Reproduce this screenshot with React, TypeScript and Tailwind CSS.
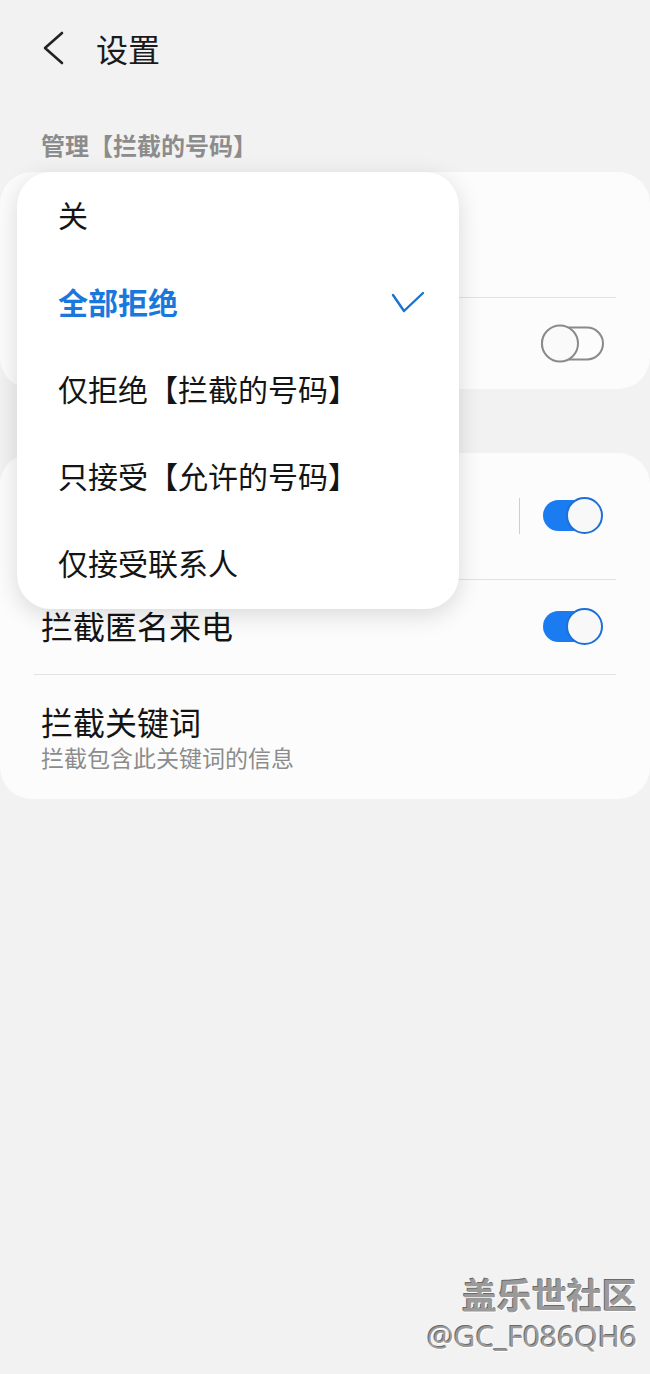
import { FC } from "react";

const font = "font-['Noto_Sans_CJK_SC','Noto_Sans',sans-serif]";

const Toggle: FC<{ on?: boolean }> = ({ on }) =>
    on ? (
        <svg width="64" height="40" viewBox="0 0 64 40">
            <rect x="2" y="4" width="52" height="31" rx="15.5" fill="#1a7cf0" />
            <circle cx="43.5" cy="19.5" r="17.5" fill="#f8f8f8" stroke="#1f70d6" strokeWidth="2" />
        </svg>
    ) : (
        <svg width="64" height="40" viewBox="0 0 64 40">
            <rect x="1" y="3.5" width="61" height="32" rx="16" fill="none" stroke="#8a8a8a" strokeWidth="2" />
            <circle cx="19" cy="19.5" r="18" fill="#fafafa" stroke="#8a8a8a" strokeWidth="2" />
        </svg>
    );

const options = ["关", "全部拒绝", "仅拒绝【拦截的号码】", "只接受【允许的号码】", "仅接受联系人"];

const App: FC = () => {
    const selected = 1;

    return (
        <div className={`relative flex min-h-[1374px] w-[650px] flex-col bg-[#f2f2f2] ${font}`}>
            {/* header */}
            <div className="flex h-[96px] items-center pl-[42px]">
                <svg width="24" height="34" viewBox="0 0 24 34" className="mr-[30px]">
                    <polyline points="20,2 3,17 20,32" fill="none" stroke="#222" strokeWidth="2.6" strokeLinecap="round" strokeLinejoin="round" />
                </svg>
                <span className="text-[32px] leading-none text-[#1a1a1a]">设置</span>
            </div>

            <div className="mt-[33px] mb-[12px] pl-[41px] text-[24px] leading-[31px] font-bold text-[#8c8c8c]">
                管理【拦截的号码】
            </div>

            {/* card 1 */}
            <div className="rounded-[32px] bg-[#fcfcfc]">
                <div className="h-[125px]" />
                <div className="mx-[34px] h-px bg-[#e2e2e2]" />
                <div className="flex h-[91px] items-center justify-end pr-[45px]">
                    <Toggle />
                </div>
            </div>

            {/* card 2 */}
            <div className="mt-[64px] rounded-[32px] bg-[#fcfcfc]">
                <div className="flex h-[126px] items-center justify-end pr-[45px]">
                    <div className="mr-[21px] h-[36px] w-px bg-[#cfcfcf]" />
                    <Toggle on />
                </div>
                <div className="mx-[34px] h-px bg-[#e2e2e2]" />
                <div className="flex h-[94px] items-center justify-between pl-[41px] pr-[45px]">
                    <span className="pb-[4px] text-[32px] leading-none text-[#141414]">拦截匿名来电</span>
                    <Toggle on />
                </div>
                <div className="mx-[34px] h-px bg-[#e2e2e2]" />
                <div className="flex h-[124px] flex-col justify-center pl-[41px]">
                    <span className="text-[32px] leading-[40px] text-[#141414]">拦截关键词</span>
                    <span className="text-[23px] leading-[32px] text-[#8c8c8c]">拦截包含此关键词的信息</span>
                </div>
            </div>

            {/* watermark */}
            <div className="mt-auto flex flex-col items-end pr-[13px] pb-[18px] [text-shadow:1px_1px_0_#fff,-1px_-1px_0_#6a6a6a]">
                <span className="text-[35px] leading-[44px] font-bold text-[#9a9a9a]">盖乐世社区</span>
                <span className="font-['Open_Sans',sans-serif] text-[30px] leading-[40px] text-[#9a9a9a]">@GC_F086QH6</span>
            </div>

            {/* dropdown menu */}
            <div className="absolute top-[172px] left-[17px] w-[442px] rounded-[34px] bg-white pt-0 pb-[2px] shadow-[0_6px_24px_rgba(0,0,0,0.14)]">
                {options.map((opt, i) => (
                    <div key={opt} className="flex h-[87px] items-center justify-between pr-[34px] pl-[41px]">
                        <span
                            className={
                                i === selected
                                    ? "pb-[4px] text-[30px] leading-none font-bold text-[#1a78dc]"
                                    : "pb-[4px] text-[30px] leading-none text-[#141414]"
                            }
                        >
                            {opt}
                        </span>
                        {i === selected && (
                            <svg width="34" height="24" viewBox="0 0 34 24">
                                <polyline points="2,4 13,20 32,2" fill="none" stroke="#1a72d4" strokeWidth="2.4" strokeLinecap="round" strokeLinejoin="round" />
                            </svg>
                        )}
                    </div>
                ))}
            </div>
        </div>
    );
};

export default App;
